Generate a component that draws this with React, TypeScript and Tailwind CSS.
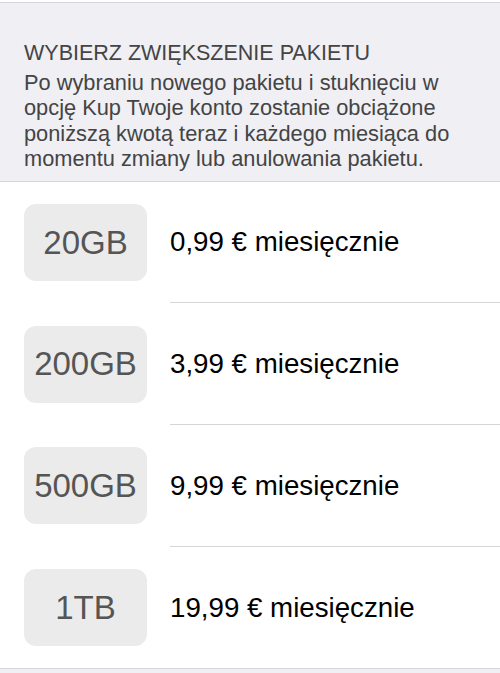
import React from 'react';

const plans = [
  { size: '20GB', price: '0,99 € miesięcznie' },
  { size: '200GB', price: '3,99 € miesięcznie' },
  { size: '500GB', price: '9,99 € miesięcznie' },
  { size: '1TB', price: '19,99 € miesięcznie' },
];

export default function App() {
  return (
    <div className="w-[500px] h-[673px] overflow-hidden bg-[#efeff4]" style={{ fontFamily: '"Liberation Sans", Arial, sans-serif' }}>
      <div className="h-[2px] bg-white" />
      <div className="border-t border-[#d6d6da] border-b px-6 pt-[37px] pb-[9px]">
        <h2 className="text-[21.5px] leading-[26px] text-[#444] uppercase">Wybierz zwiększenie pakietu</h2>
        <p className="mt-[4px] text-[21.8px] leading-[25.4px] text-[#444]">
          Po wybraniu nowego pakietu i stuknięciu w opcję Kup Twoje konto zostanie obciążone poniższą kwotą teraz i każdego miesiąca do momentu zmiany lub anulowania pakietu.
        </p>
      </div>
      <ul className="bg-white border-b border-[#d6d6da]">
        {plans.map((plan, i) => (
          <li key={plan.size} className="flex items-stretch h-[121.7px]">
            <div className="flex items-center pl-6 pr-[23px]">
              <div className="w-[123px] h-[77px] rounded-[12px] bg-[#ebebeb] flex items-center justify-center text-[33px] text-[#555]">
                {plan.size}
              </div>
            </div>
            <div className={`flex-1 flex items-center text-[27.7px] text-black ${i < plans.length - 1 ? 'border-b border-[#d6d6da]' : ''}`}>
              {plan.price}
            </div>
          </li>
        ))}
      </ul>
    </div>
  );
}
